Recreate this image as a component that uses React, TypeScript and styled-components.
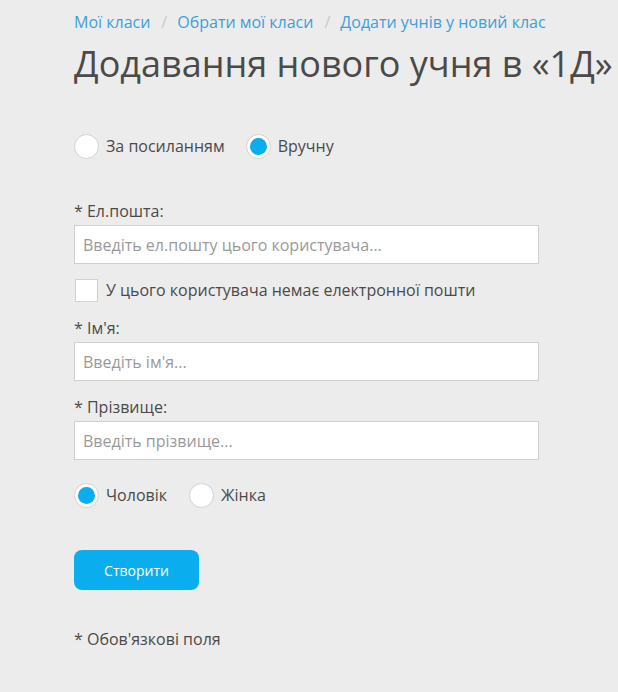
import React from "react";
import styled, { createGlobalStyle } from "styled-components";

const Global = createGlobalStyle`
  html, body { margin: 0; padding: 0; background: #ececec; }
  body { font-family: "Open Sans", "Noto Sans", sans-serif; color: #4a4a4a; }
  * { box-sizing: border-box; }
`;

const Page = styled.div`
  padding: 10px 0 0 74px;
  width: 618px;
  height: 692px;
  overflow: hidden;
`;

const Breadcrumbs = styled.nav`
  display: flex;
  align-items: center;
  font-size: 16px;
  line-height: 24px;
  white-space: nowrap;
`;

const Crumb = styled.a`
  color: #3d9fdb;
  text-decoration: none;
`;

const Sep = styled.span`
  color: #c9c9c9;
  padding: 0 10px 0 11px;
`;

const Title = styled.h1`
  margin: 6px 0 0;
  font-size: 36px;
  font-weight: 400;
  line-height: 48px;
  color: #4a4a48;
  white-space: nowrap;
`;

const RadioRow = styled.div<{ $mt: number; $gap: number }>`
  display: flex;
  align-items: center;
  gap: ${(p) => p.$gap}px;
  margin-top: ${(p) => p.$mt}px;
  height: 24px;
`;

const RadioLabel = styled.label`
  display: flex;
  align-items: center;
  gap: 7px;
  font-size: 16px;
  line-height: 24px;
`;

const RadioCircle = styled.span<{ $on?: boolean }>`
  width: 25px;
  height: 25px;
  border-radius: 50%;
  background: #fff;
  border: 1px solid #d2d2d2;
  display: flex;
  align-items: center;
  justify-content: center;
  &::after {
    content: "";
    display: ${(p) => (p.$on ? "block" : "none")};
    width: 17px;
    height: 17px;
    border-radius: 50%;
    background: #0aaeef;
  }
`;

const Field = styled.div<{ $mt: number }>`
  margin-top: ${(p) => p.$mt}px;
  width: 465px;
`;

const Label = styled.div`
  font-size: 16px;
  line-height: 22px;
  margin-bottom: 3px;
`;

const Input = styled.input`
  display: block;
  width: 465px;
  height: 39px;
  border: 1px solid #cfcfcf;
  background: #fff;
  padding: 0 8px;
  font-family: inherit;
  font-size: 16px;
  color: #4a4a4a;
  outline: none;
  &::placeholder { color: #9a9a9a; }
`;

const CheckRow = styled.label`
  display: flex;
  align-items: center;
  gap: 8px;
  margin-top: 14px;
  height: 24px;
  font-size: 16px;
  line-height: 24px;
`;

const CheckBox = styled.span`
  width: 23px;
  height: 23px;
  background: #fff;
  border: 1px solid #d2d2d2;
  margin-left: 1px;
`;

const Button = styled.button`
  margin-top: 43px;
  width: 125px;
  height: 40px;
  border: none;
  border-radius: 8px;
  background: #0aaeef;
  color: #fff;
  font-family: inherit;
  font-size: 14px;
  display: block;
`;

const Note = styled.div`
  margin-top: 37px;
  font-size: 16px;
  line-height: 24px;
`;

export default function App() {
  return (
    <>
      <Global />
      <Page>
        <Breadcrumbs>
          <Crumb href="#">Мої класи</Crumb>
          <Sep>/</Sep>
          <Crumb href="#">Обрати мої класи</Crumb>
          <Sep>/</Sep>
          <Crumb href="#">Додати учнів у новий клас</Crumb>
        </Breadcrumbs>
        <Title>Додавання нового учня в «1Д»</Title>
        <RadioRow $mt={46} $gap={21}>
          <RadioLabel>
            <RadioCircle />
            За посиланням
          </RadioLabel>
          <RadioLabel>
            <RadioCircle $on />
            Вручну
          </RadioLabel>
        </RadioRow>
        <Field $mt={42}>
          <Label>* Ел.пошта:</Label>
          <Input placeholder="Введіть ел.пошту цього користувача..." />
        </Field>
        <CheckRow>
          <CheckBox />
          У цього користувача немає електронної пошти
        </CheckRow>
        <Field $mt={15}>
          <Label>* Ім'я:</Label>
          <Input placeholder="Введіть ім'я..." />
        </Field>
        <Field $mt={15}>
          <Label>* Прізвище:</Label>
          <Input placeholder="Введіть прізвище..." />
        </Field>
        <RadioRow $mt={23} $gap={22}>
          <RadioLabel>
            <RadioCircle $on />
            Чоловік
          </RadioLabel>
          <RadioLabel>
            <RadioCircle />
            Жінка
          </RadioLabel>
        </RadioRow>
        <Button>Створити</Button>
        <Note>* Обов'язкові поля</Note>
      </Page>
    </>
  );
}
